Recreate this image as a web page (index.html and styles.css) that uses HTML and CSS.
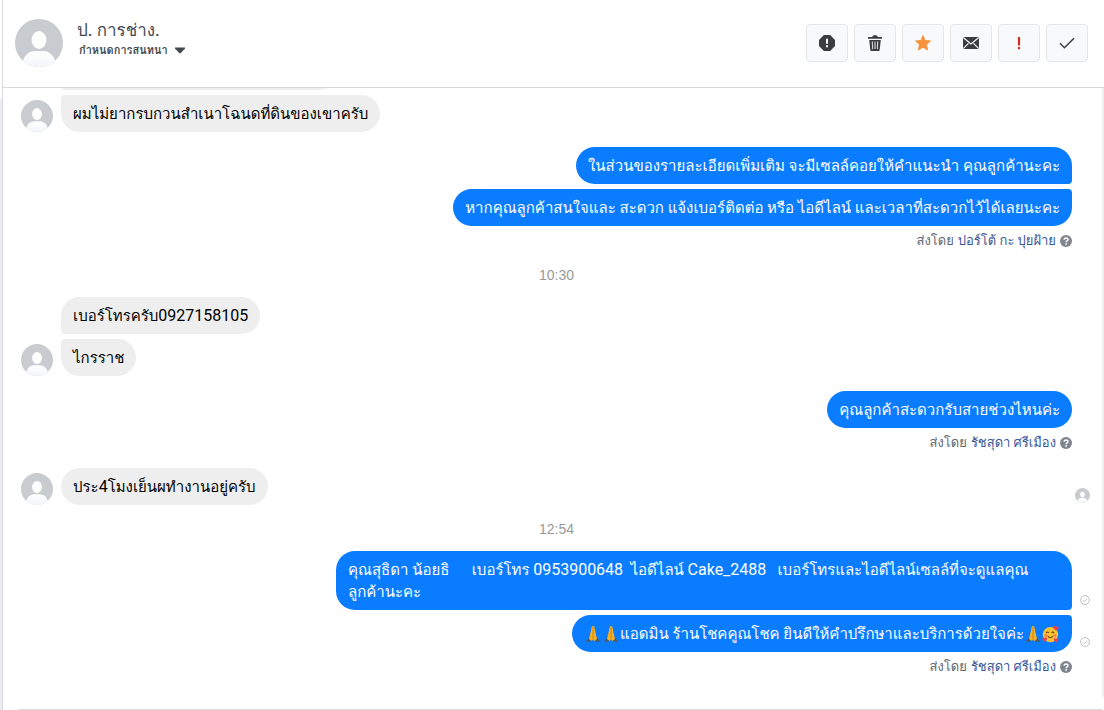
FILE: index.html
```html
<!DOCTYPE html>
<html lang="th">
<head>
    <meta charset="UTF-8">
    <title>ป. การช่าง.</title>
    <link rel="stylesheet" href="styles.css">
</head>
<body>
    <!-- shared icons -->
    <svg class="defs" width="0" height="0">
        <defs>
            <clipPath id="round"><circle cx="24" cy="24" r="24"/></clipPath>
            <linearGradient id="shade" x1="0" y1="0" x2="0" y2="1">
                <stop offset="0" stop-color="#fff"/>
                <stop offset="1" stop-color="#f3f5f9"/>
            </linearGradient>
            <symbol id="person" viewBox="0 0 48 48">
                <g clip-path="url(#round)">
                    <rect width="48" height="48" fill="#c8cbcf"/>
                    <ellipse cx="24" cy="21" rx="7.4" ry="9" fill="#fff"/>
                    <path d="M7 48c0-10 6-16 13-16h8c7 0 13 6 13 16z" fill="url(#shade)"/>
                </g>
            </symbol>
            <symbol id="help" viewBox="0 0 12 12">
                <circle cx="6" cy="6" r="6" fill="#7f858c"/>
                <path d="M4.1 4.7C4.1 2.3 8 2.3 8 4.6 8 6 6.1 5.9 6.1 7.3" fill="none" stroke="#fff" stroke-width="1.5"/>
                <rect x="5.3" y="8.2" width="1.6" height="1.6" fill="#fff"/>
            </symbol>
            <symbol id="sent" viewBox="0 0 10 10">
                <circle cx="5" cy="5" r="4.4" fill="none" stroke="#bcc0c4" stroke-width="1"/>
                <path d="M2.9 5.1l1.5 1.5 2.7-2.9" fill="none" stroke="#bcc0c4" stroke-width="1"/>
            </symbol>
            <symbol id="pray" viewBox="0 0 16 18">
                <path d="M.8 16.500l4.200-5 2 3.500-3 2z" fill="#4d5b66"/>
                <path d="M15.200 16.500l-4.200-5-2 3.500 3 2z" fill="#4d5b66"/>
                <path d="M8 1C6.600 1 6.400 2.600 6.100 5L4.600 11.500 4 14l2.600 2L8 14.500 9.400 16 12 14l-.6-2.500L9.900 5C9.600 2.600 9.400 1 8 1z" fill="#f7b126"/>
                <path d="M8 2v12.500" stroke="#c07a12" stroke-width=".8"/>
            </symbol>
            <symbol id="hearts" viewBox="0 0 17 17">
                <circle cx="8" cy="9" r="7.2" fill="#fcc331"/>
                <path d="M3.8 7.6q1.3-1.8 2.6 0M9 7.6q1.3-1.8 2.6 0" fill="none" stroke="#5d3d12" stroke-width="1"/>
                <circle cx="3.9" cy="10" r="1.7" fill="#f58a4b"/>
                <circle cx="12" cy="10" r="1.7" fill="#f58a4b"/>
                <path d="M5.6 10.8q2.3 2.4 4.6 0" fill="none" stroke="#5d3d12" stroke-width="1"/>
                <path d="M13.2 5.4L10.8 3C9.8 1.2 12.2.1 13.2 1.7 14.5.3 16.6 1.6 15.5 3.3z" fill="#ee3d54"/>
                <path d="M2.6 15.8L.6 13.6c-.8-1.7 1.1-2.4 2-1.2 1-1.2 2.9-.2 2 1.2z" fill="#ee3d54"/>
                <path d="M13.4 16.6l-2.1-2.2c-.8-1.7 1.1-2.4 2-1.2 1-1.2 2.9-.2 2 1.2z" fill="#ee3d54"/>
            </symbol>
        </defs>
    </svg>

    <div class="sidebar-edge"></div>
    <main class="thread">
        <header class="thread-header">
            <svg class="avatar-large"><use href="#person"/></svg>
            <div class="contact">
                <h1 class="contact-name">ป. การช่าง.</h1>
                <button class="assign">กำหนดการสนทนา
                    <svg width="12" height="7" viewBox="0 0 12 7"><path d="M1 .5h10v1L6.600 6.200H5.400L1 1.500z" fill="#444950"/></svg>
                </button>
            </div>
            <div class="actions">
                <button class="action" aria-label="สแปม">
                    <svg viewBox="0 0 16 16"><path d="M4.900 0h6.200L16 4.900v6.200L11.100 16H4.900L0 11.100V4.900z" fill="#3b3d40"/><path d="M7 3.800h2v5H7zM7 10.200h2v2H7z" fill="#fff"/></svg>
                </button>
                <button class="action" aria-label="ลบ">
                    <svg viewBox="0 0 16 16"><path d="M1 2h4.200Q5.500.3 7 .3h2Q10.500.3 10.800 2H15v1.700H1zM2.200 5h11.600l-1.200 10.200q-.1.800-1 .8H4.400q-.9 0-1-.8z" fill="#3b3d40"/><path d="M5.300 6.500l.4 7.600M8 6.500v7.600M10.700 6.500l-.4 7.600" stroke="#d5d7da" stroke-width="1.100"/></svg>
                </button>
                <button class="action" aria-label="ติดดาว">
                    <svg viewBox="0 0 16 16"><path d="M8 .6l2.100 4.900 5.300.5-4 3.600 1.200 5.300L8 12.200l-4.600 2.700 1.200-5.300-4-3.600 5.300-.5z" fill="#f7923b" stroke="#f7923b" stroke-width="1" stroke-linejoin="round"/></svg>
                </button>
                <button class="action" aria-label="ทำเครื่องหมายว่ายังไม่อ่าน">
                    <svg viewBox="0 0 16 16"><rect y="2" width="16" height="12" rx="1.500" fill="#3b3d40"/><path d="M.5 2.800L8 9l7.500-6.200M.5 13.300l5-5M15.500 13.300l-5-5" fill="none" stroke="#f5f6f7" stroke-width="1.200"/></svg>
                </button>
                <button class="action" aria-label="ติดตามผล">
                    <svg viewBox="0 0 16 16"><path d="M6.900 2h2.200v8.500H6.900zM6.900 12h2.200v2.200H6.900z" fill="#d0311e"/></svg>
                </button>
                <button class="action" aria-label="เสร็จสิ้น">
                    <svg viewBox="0 0 16 16"><path d="M1 8.300l4.400 4.400L15 3.200" fill="none" stroke="#3b3d40" stroke-width="1.500"/></svg>
                </button>
            </div>
        </header>

        <section class="messages">
            <div class="group">
                <div class="row"><div class="bubble first clipped"></div></div>
                <div class="row">
                    <svg class="avatar"><use href="#person"/></svg>
                    <div class="bubble last">ผมไม่ยากรบกวนสำเนาโฉนดที่ดินของเขาครับ</div>
                </div>
            </div>

            <div class="group outgoing">
                <div class="row"><div class="bubble first">ในส่วนของรายละเอียดเพิ่มเติม จะมีเซลล์คอยให้คำแนะนำ คุณลูกค้านะคะ</div></div>
                <div class="row"><div class="bubble last">หากคุณลูกค้าสนใจและ สะดวก แจ้งเบอร์ติดต่อ หรือ ไอดีไลน์ และเวลาที่สะดวกไว้ได้เลยนะคะ</div></div>
                <div class="sender">ส่งโดย <a href="#">ปอร์โต้ กะ ปุยฝ้าย</a> <svg class="help"><use href="#help"/></svg></div>
            </div>

            <time class="timestamp">10:30</time>

            <div class="group">
                <div class="row"><div class="bubble first">เบอร์โทรครับ<span class="latin">0927158105</span></div></div>
                <div class="row">
                    <svg class="avatar"><use href="#person"/></svg>
                    <div class="bubble last">ไกรราช</div>
                </div>
            </div>

            <div class="group outgoing">
                <div class="row"><div class="bubble">คุณลูกค้าสะดวกรับสายช่วงไหนค่ะ</div></div>
                <div class="sender">ส่งโดย <a href="#">รัชสุดา ศรีเมือง</a> <svg class="help"><use href="#help"/></svg></div>
            </div>

            <div class="group">
                <div class="row">
                    <svg class="avatar"><use href="#person"/></svg>
                    <div class="bubble">ประ<span class="latin">4</span>โมงเย็นผทำงานอยู่ครับ</div>
                    <svg class="seen"><use href="#person"/></svg>
                </div>
            </div>

            <time class="timestamp">12:54</time>

            <div class="group outgoing">
                <div class="row">
                    <div class="bubble first">คุณสุธิดา น้อยธิ      เบอร์โทร <span class="latin">0953900648</span>  ไอดีไลน์ <span class="latin">Cake_2488</span>   เบอร์โทรและไอดีไลน์เซลล์ที่จะดูแลคุณ<wbr><span class="keep">ลูกค้านะคะ</span></div>
                    <svg class="sent"><use href="#sent"/></svg>
                </div>
                <div class="row">
                    <div class="bubble last"><svg class="emoji"><use href="#pray"/></svg><svg class="emoji"><use href="#pray"/></svg>แอดมิน ร้านโชคคูณโชค ยินดีให้คำปรึกษาและบริการด้วยใจค่ะ<svg class="emoji"><use href="#pray"/></svg><svg class="emoji"><use href="#hearts"/></svg></div>
                    <svg class="sent"><use href="#sent"/></svg>
                </div>
                <div class="sender">ส่งโดย <a href="#">รัชสุดา ศรีเมือง</a> <svg class="help"><use href="#help"/></svg></div>
            </div>
        </section>
        <footer class="composer"></footer>
    </main>
</body>
</html>
```

FILE: styles.css
```css
* { box-sizing: border-box; }
body { margin: 0; height: 100vh; display: flex; overflow: hidden; background: #fff; font-family: Roboto, Loma, Tahoma, "Noto Sans Thai Looped", "Liberation Sans", sans-serif; font-size: 15px; color: #000; }
button { font-family: inherit; cursor: pointer; }
.defs { position: absolute; }
.sidebar-edge { width: 2px; margin-top: 99px; background: #ebedf0; }

.thread { flex: 1; min-width: 0; display: flex; flex-direction: column; border-left: 1px solid #d8dade; }
.thread-header { display: flex; align-items: center; height: 88px; padding: 0 16px 2px 12px; border-bottom: 1px solid #d8dade; flex: none; }
.avatar-large { width: 48px; height: 48px; }
.contact { margin-left: 14px; padding-bottom: 6px; }
.contact-name { margin: 0; font-size: 17px; line-height: 22px; font-weight: 500; color: #444950; }
.assign { display: flex; align-items: center; gap: 6px; padding: 0 2px; border: 0; background: none; font-size: 11px; line-height: 20px; font-weight: bold; color: #444950; }
.actions { display: flex; gap: 6px; margin-left: auto; }
.action { display: flex; align-items: center; justify-content: center; width: 42px; height: 38px; padding: 0; border: 1px solid #e4e6ea; border-radius: 4px; background: #f8f9fb; }
.action svg { width: 16px; height: 16px; }

.messages { flex: 1; min-height: 0; display: flex; flex-direction: column; justify-content: flex-end; gap: 15px; overflow: hidden; padding: 0 0 20px 18px; border-right: 2px solid #f0f0f0; }
.group { display: flex; flex-direction: column; gap: 5px; }
.row { position: relative; display: flex; align-items: flex-end; padding-left: 40px; }
.row:has(.avatar) { padding-left: 0; }
.avatar { width: 32px; height: 32px; margin-right: 8px; flex: none; }
.bubble { max-width: 736px; padding: 8px 12px 7px; border-radius: 19px; background: #eee; line-height: 22px; white-space: pre-wrap; }
.clipped { width: 276px; height: 37px; }
.first { border-bottom-left-radius: 4px; }
.last { border-top-left-radius: 4px; }
.latin { font-size: 16px; line-height: 20px; font-weight: 400; }
.keep { white-space: nowrap; }
.seen { width: 15px; height: 15px; margin: 0 12px 2px auto; }

.outgoing { padding-right: 30px; }
.outgoing .row { justify-content: flex-end; padding-left: 0; }
.outgoing .bubble { background: #0a7cff; color: #fff; font-weight: 500; }
.outgoing .first { border-radius: 19px 19px 4px 19px; }
.outgoing .last { border-radius: 19px 4px 19px 19px; }
.sent { position: absolute; right: -18px; bottom: 5px; width: 10px; height: 10px; }
.emoji { width: 18px; height: 18px; vertical-align: -4px; }
.sender { display: flex; align-items: center; justify-content: flex-end; gap: 4px; font-size: 13px; line-height: 20px; color: #606770; }
.sender a { color: #385898; text-decoration: none; }
.help { width: 12px; height: 12px; }
.timestamp { align-self: center; margin: -1px 10px -3px 0; font-family: "Liberation Sans", Arial, sans-serif; font-size: 14px; line-height: 20px; color: #999; }

.composer { height: 13px; flex: none; margin: 0 2px 0 16px; border-bottom: 1px solid #d8dade; }
```
